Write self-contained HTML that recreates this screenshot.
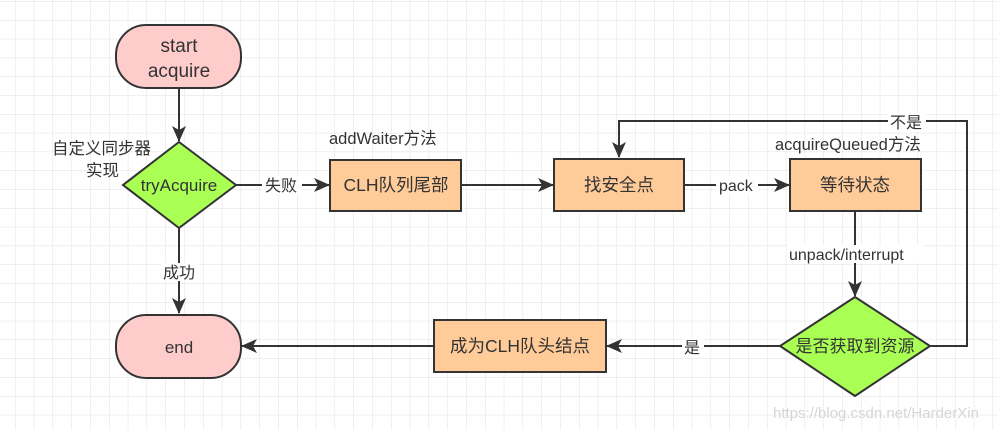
<!DOCTYPE html>
<html><head><meta charset="utf-8"><style>
html,body{margin:0;padding:0;background:#fff;}
svg{display:block;}
text{font-family:"Liberation Sans","Noto Sans CJK SC",sans-serif;fill:#333;}
</style></head><body>
<svg width="998" height="430" viewBox="0 0 998 430" xmlns="http://www.w3.org/2000/svg">
<defs>
<pattern id="g" x="15" y="20" width="18.8" height="18.8" patternUnits="userSpaceOnUse">
<path d="M0 0H18.8M0 0V18.8" stroke="#e0e0e0" stroke-width="1" fill="none"/>
</pattern>
<marker id="a" markerWidth="16" markerHeight="14" refX="15" refY="7" orient="auto" markerUnits="userSpaceOnUse"><path d="M0 0L16 7L0 14L4 7Z" fill="#333"/></marker>
</defs>
<rect width="998" height="430" fill="url(#g)"/>
<g stroke="#333" stroke-width="2" fill="none">
<line x1="179" y1="88" x2="179" y2="141" marker-end="url(#a)"/>
<line x1="236" y1="185" x2="329" y2="185" marker-end="url(#a)"/>
<line x1="179" y1="228" x2="179" y2="313" marker-end="url(#a)"/>
<line x1="461" y1="185" x2="553" y2="185" marker-end="url(#a)"/>
<line x1="684" y1="185" x2="789" y2="185" marker-end="url(#a)"/>
<line x1="855" y1="211" x2="855" y2="296" marker-end="url(#a)"/>
<line x1="780" y1="346" x2="607" y2="346" marker-end="url(#a)"/>
<line x1="434" y1="346" x2="242" y2="346" marker-end="url(#a)"/>
<polyline points="930,346 967,346 967,121 619,121 619,157" marker-end="url(#a)"/>
</g>
<g stroke="#333" stroke-width="2">
<rect x="116" y="25" width="125" height="63" rx="30" fill="#ffcccc"/>
<rect x="116" y="315" width="125" height="63" rx="30" fill="#ffcccc"/>
<polygon points="179,142 236,185 179,228 123,185" fill="#aaff55"/>
<polygon points="855,297 930,346 855,396 780,346" fill="#aaff55"/>
<rect x="330" y="160" width="131" height="51" fill="#ffcc99"/>
<rect x="554" y="159" width="130" height="52" fill="#ffcc99"/>
<rect x="790" y="159" width="131" height="52" fill="#ffcc99"/>
<rect x="434" y="320" width="172" height="52" fill="#ffcc99"/>
</g>
<g font-size="19" text-anchor="middle">
<text x="179" y="52">start</text>
<text x="179" y="77">acquire</text>
</g>
<g font-size="17" text-anchor="middle">
<text x="179" y="353">end</text>
<text x="179" y="191">tryAcquire</text>
<text x="855" y="352">是否获取到资源</text>
</g>
<g font-size="17.5" text-anchor="middle">
<text x="396" y="191">CLH队列尾部</text>
<text x="619" y="191">找安全点</text>
<text x="855" y="191">等待状态</text>
<text x="520" y="352">成为CLH队头结点</text>
</g>
<g font-size="16">
<rect x="262" y="176" width="40" height="18" fill="#fff"/>
<text x="265" y="191">失败</text>
<rect x="161" y="263" width="38" height="18" fill="#fff"/>
<text x="163" y="278">成功</text>
<rect x="716" y="176" width="42" height="18" fill="#fff"/>
<text x="719" y="191">pack</text>
<rect x="787" y="245" width="136" height="18" fill="#fff"/>
<text x="789" y="260">unpack/interrupt</text>
<rect x="682" y="338" width="22" height="18" fill="#fff"/>
<text x="684" y="353">是</text>
<rect x="888" y="113" width="38" height="18" fill="#fff"/>
<text x="890" y="128">不是</text>
<text x="329" y="144" font-size="16.5">addWaiter方法</text>
<text x="775" y="150" font-size="16.5">acquireQueued方法</text>
<text x="52" y="154" font-size="16.5">自定义同步器</text>
<text x="86" y="176" font-size="16.5">实现</text>
</g>
<text x="773" y="418" font-size="15" style="fill:#d6d6d6">https://blog.csdn.net/HarderXin</text>
</svg>
</body></html>
